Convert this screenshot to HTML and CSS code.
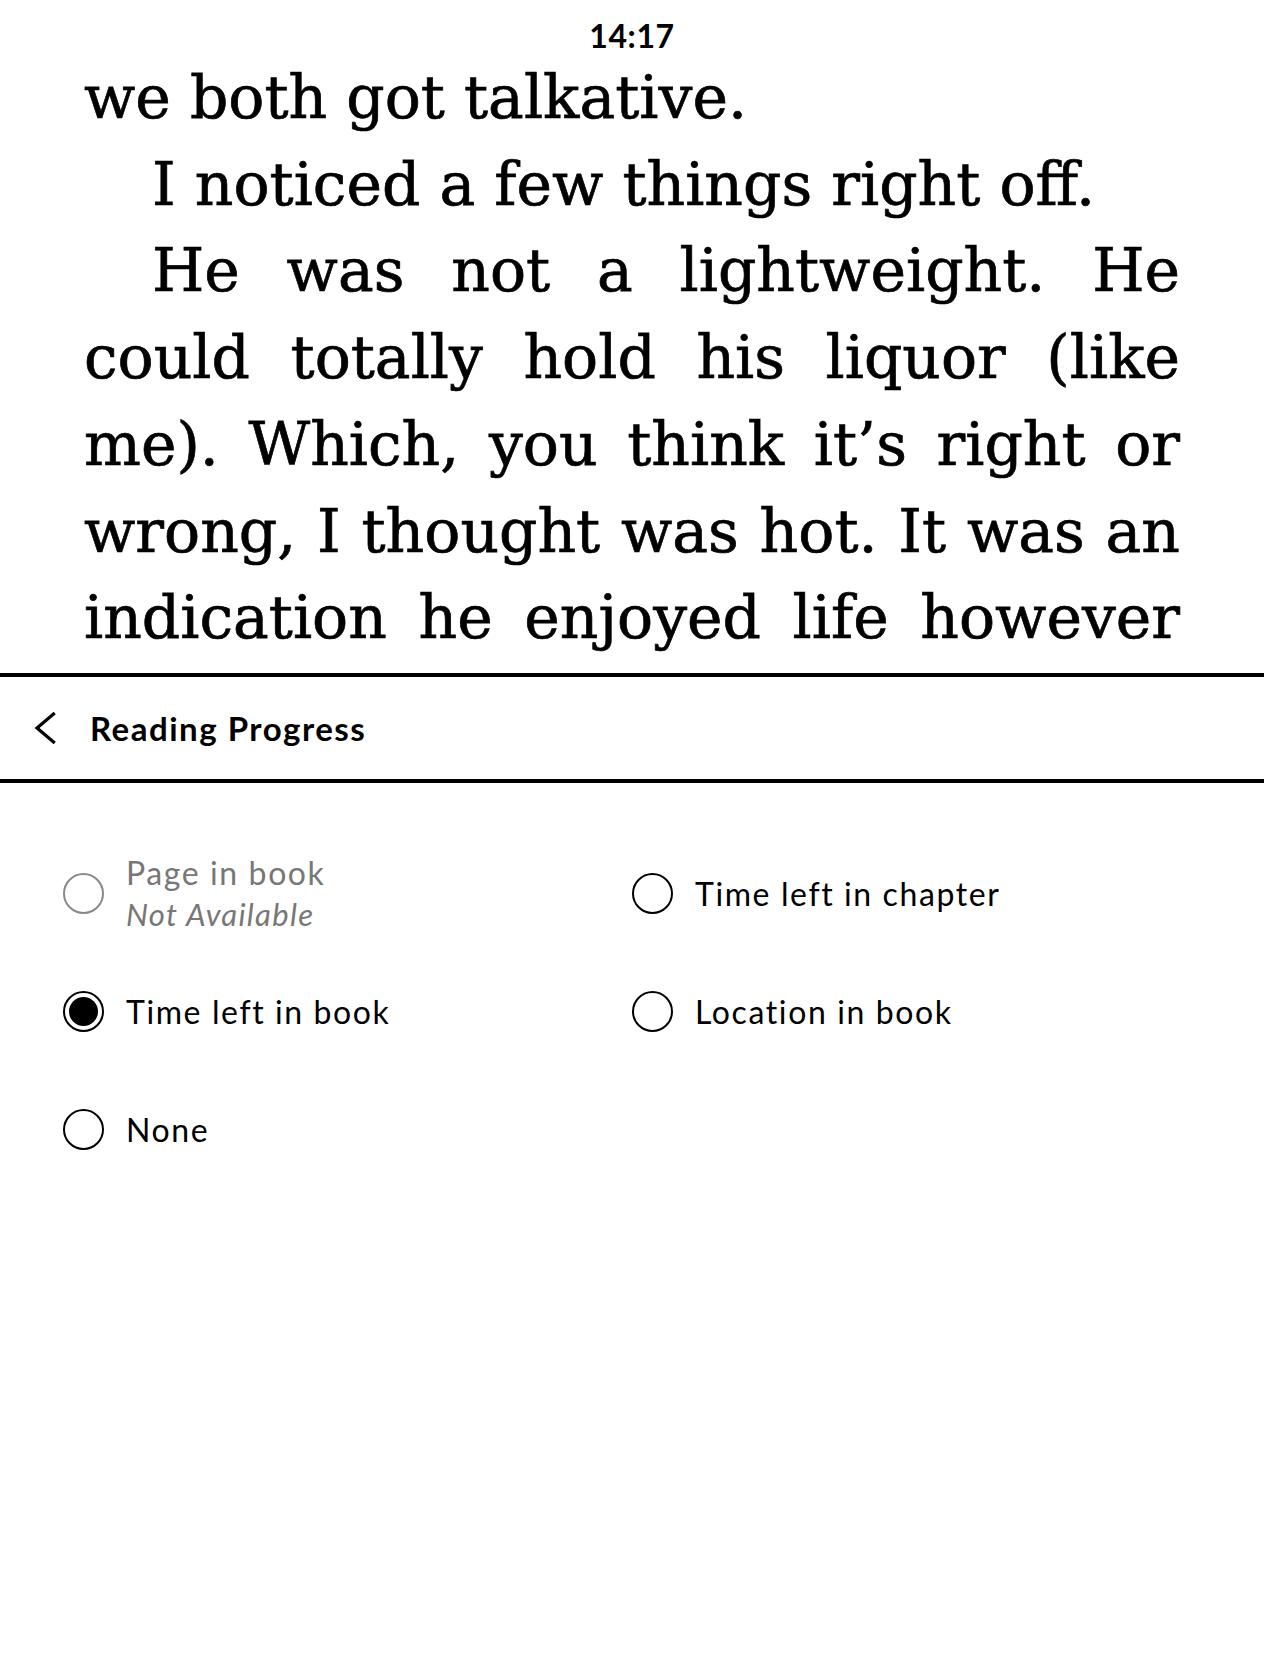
FILE: index.html
```html
<!DOCTYPE html>
<html lang="en">
<head>
<meta charset="utf-8">
<title>Reading Progress</title>
<link rel="stylesheet" href="styles.css">
</head>
<body>
<div class="screen">
  <div class="status"><span class="time">14:17</span></div>
  <div class="book">
    <div class="line end">we both got talkative.</div>
    <div class="line end indent">I noticed a few things right off.</div>
    <div class="line indent">He was not a lightweight. He</div>
    <div class="line">could totally hold his liquor (like</div>
    <div class="line">me). Which, you think it’s right or</div>
    <div class="line">wrong, I thought was hot. It was an</div>
    <div class="line">indication he enjoyed life however</div>
  </div>
  <div class="panel">
    <div class="header">
      <svg class="back" width="24" height="32" viewBox="0 0 24 32"><polyline points="20.5,2 4,16 20.5,30" fill="none" stroke="#000" stroke-width="3.2" stroke-linecap="square" stroke-linejoin="miter"/></svg>
      <span class="title">Reading Progress</span>
    </div>
    <div class="options">
      <div class="option disabled">
        <span class="radio"></span>
        <span class="label"><span class="main">Page in book</span><span class="sub">Not Available</span></span>
      </div>
      <div class="option">
        <span class="radio"></span>
        <span class="label"><span class="main">Time left in chapter</span></span>
      </div>
      <div class="option">
        <span class="radio checked"></span>
        <span class="label"><span class="main">Time left in book</span></span>
      </div>
      <div class="option">
        <span class="radio"></span>
        <span class="label"><span class="main">Location in book</span></span>
      </div>
      <div class="option">
        <span class="radio"></span>
        <span class="label"><span class="main">None</span></span>
      </div>
    </div>
  </div>
</div>
</body>
</html>
```
FILE: styles.css
```css
html, body {
  margin: 0;
  padding: 0;
  background: #fff;
}
body {
  width: 1264px;
  height: 1680px;
  overflow: hidden;
  color: #000;
  font-family: Lato, "Noto Sans", sans-serif;
}
.screen {
  display: flex;
  flex-direction: column;
}
.status {
  height: 54px;
  box-sizing: border-box;
  padding-top: 17px;
  line-height: 37px;
  text-align: center;
}
.time {
  font-size: 32px;
  font-weight: 700;
  letter-spacing: 0.6px;
}
.book {
  height: 619px;
  overflow: hidden;
  padding: 0 84px;
  font-family: "DejaVu Serif", serif;
  font-size: 60px;
  line-height: 86.7px;
  -webkit-text-stroke: 0.7px #000;
}
.line {
  text-align: justify;
  text-align-last: justify;
  white-space: nowrap;
}
.line.end {
  text-align-last: left;
}
.line.indent {
  text-indent: 68px;
}
.header {
  border-top: 4px solid #000;
  border-bottom: 4px solid #000;
  height: 102px;
  display: flex;
  align-items: center;
  padding-left: 33px;
}
.back {
  display: block;
  margin-right: 33px;
}
.title {
  font-size: 33px;
  font-weight: 700;
  letter-spacing: 1.5px;
}
.options {
  display: grid;
  grid-template-columns: 569px 1fr;
  grid-auto-rows: 118px;
  padding: 51px 0 0 63px;
}
.option {
  display: flex;
  align-items: center;
  gap: 22px;
}
.radio {
  flex: none;
  width: 41px;
  height: 41px;
  box-sizing: border-box;
  border: 2.5px solid #000;
  border-radius: 50%;
  position: relative;
}
.radio.checked::after {
  content: "";
  position: absolute;
  left: 4px;
  top: 4px;
  right: 4px;
  bottom: 4px;
  border-radius: 50%;
  background: #000;
}
.label {
  display: flex;
  flex-direction: column;
}
.main {
  font-size: 32px;
  line-height: 41px;
  letter-spacing: 1.6px;
}
.sub {
  font-size: 31px;
  font-style: italic;
  line-height: 42px;
  letter-spacing: 1.3px;
}
.disabled {
  color: #777;
}
.disabled .radio {
  border-color: #888;
  border-width: 2px;
}
```
